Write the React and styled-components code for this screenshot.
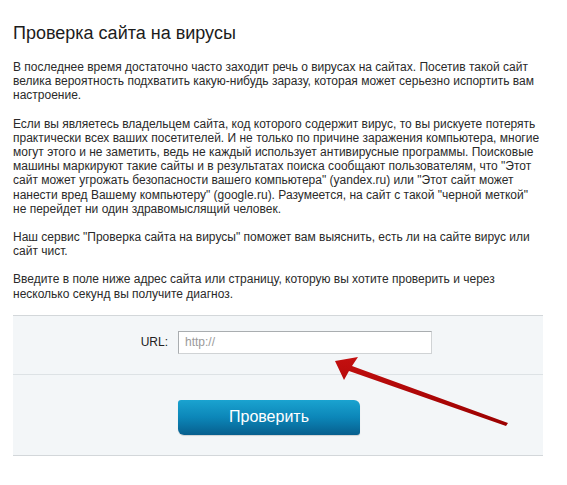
import React from "react";
import styled, { createGlobalStyle } from "styled-components";

const GlobalStyle = createGlobalStyle`
  body {
    margin: 0;
    background: #fff;
    font-family: "Liberation Sans", Arial, sans-serif;
    color: #222;
  }
`;

const Page = styled.div`
  width: 530px;
  padding: 20px 0 0 13px;
`;

const Title = styled.h1`
  margin: 0 0 14px;
  font-size: 18px;
  font-weight: normal;
  line-height: 26px;
  color: #1c1c1c;
`;

const Text = styled.p`
  margin: 0 0 14px;
  font-size: 12px;
  line-height: 14.2px;
  color: #2a2a2a;
`;

const Form = styled.div`
  position: relative;
  margin-top: 13px;
  background: #f3f6f8;
  border-top: 1px solid #d3d7da;
  border-bottom: 1px solid #d3d7da;
`;

const Row = styled.div`
  display: flex;
  align-items: center;
  padding: ${(p) => p.$pad};
  border-top: ${(p) => (p.$divided ? "1px solid #dde2e5" : "none")};
`;

const Label = styled.label`
  width: 165px;
  padding-right: 10px;
  box-sizing: border-box;
  text-align: right;
  font-size: 12px;
  color: #222;
`;

const Input = styled.input`
  width: 254px;
  height: 23px;
  box-sizing: border-box;
  margin: 0;
  padding: 0 6px;
  border: 1px solid #a9adb0;
  border-right-color: #d0d3d5;
  border-bottom-color: #d0d3d5;
  background: #fff;
  font-family: "Liberation Sans", Arial, sans-serif;
  font-size: 12px;
  color: #333;
  outline: none;
  &::placeholder {
    color: #9a9a9a;
  }
`;

const Button = styled.button`
  margin-left: 165px;
  width: 182px;
  height: 35px;
  border: none;
  border-radius: 3px 6px 3px 6px;
  background: linear-gradient(to bottom, #1aa3d0 0%, #0c86b8 50%, #075f8e 100%);
  color: #fff;
  font-family: "Liberation Sans", Arial, sans-serif;
  font-size: 16px;
  cursor: pointer;
  box-shadow: 0 1px 1px rgba(0, 0, 0, 0.15);
`;

const Arrow = styled.svg`
  position: absolute;
  left: 307px;
  top: 30px;
  pointer-events: none;
`;

export default function App() {
  return (
    <>
      <GlobalStyle />
      <Page>
        <Title>Проверка сайта на вирусы</Title>
        <Text>
          В последнее время достаточно часто заходит речь о вирусах на сайтах. Посетив такой сайт
          велика вероятность подхватить какую-нибудь заразу, которая может серьезно испортить вам
          настроение.
        </Text>
        <Text>
          Если вы являетесь владельцем сайта, код которого содержит вирус, то вы рискуете потерять
          практически всех ваших посетителей. И не только по причине заражения компьютера, многие
          могут этого и не заметить, ведь не каждый использует антивирусные программы. Поисковые
          машины маркируют такие сайты и в результатах поиска сообщают пользователям, что "Этот
          сайт может угрожать безопасности вашего компьютера" (yandex.ru) или "Этот сайт может
          нанести вред Вашему компьютеру" (google.ru). Разумеется, на сайт с такой "черной меткой"
          не перейдет ни один здравомыслящий человек.
        </Text>
        <Text>
          Наш сервис "Проверка сайта на вирусы" поможет вам выяснить, есть ли на сайте вирус или
          сайт чист.
        </Text>
        <Text>
          Введите в поле ниже адрес сайта или страницу, которую вы хотите проверить и через
          несколько секунд вы получите диагноз.
        </Text>
        <Form>
          <Row $pad="15px 0 20px">
            <Label>URL:</Label>
            <Input placeholder="http://" />
          </Row>
          <Row $divided $pad="25px 0 20px">
            <Button>Проверить</Button>
          </Row>
          <Arrow width="200" height="90" viewBox="0 0 200 90">
            <defs>
              <linearGradient id="ar" x1="0" y1="0" x2="0" y2="1">
                <stop offset="0" stopColor="#c41010" />
                <stop offset="1" stopColor="#9a0000" />
              </linearGradient>
            </defs>
            <polygon
              points="15,15 38,11 32,20 188,77 186,80 29,25 24,34"
              fill="url(#ar)"
            />
          </Arrow>
        </Form>
      </Page>
    </>
  );
}
